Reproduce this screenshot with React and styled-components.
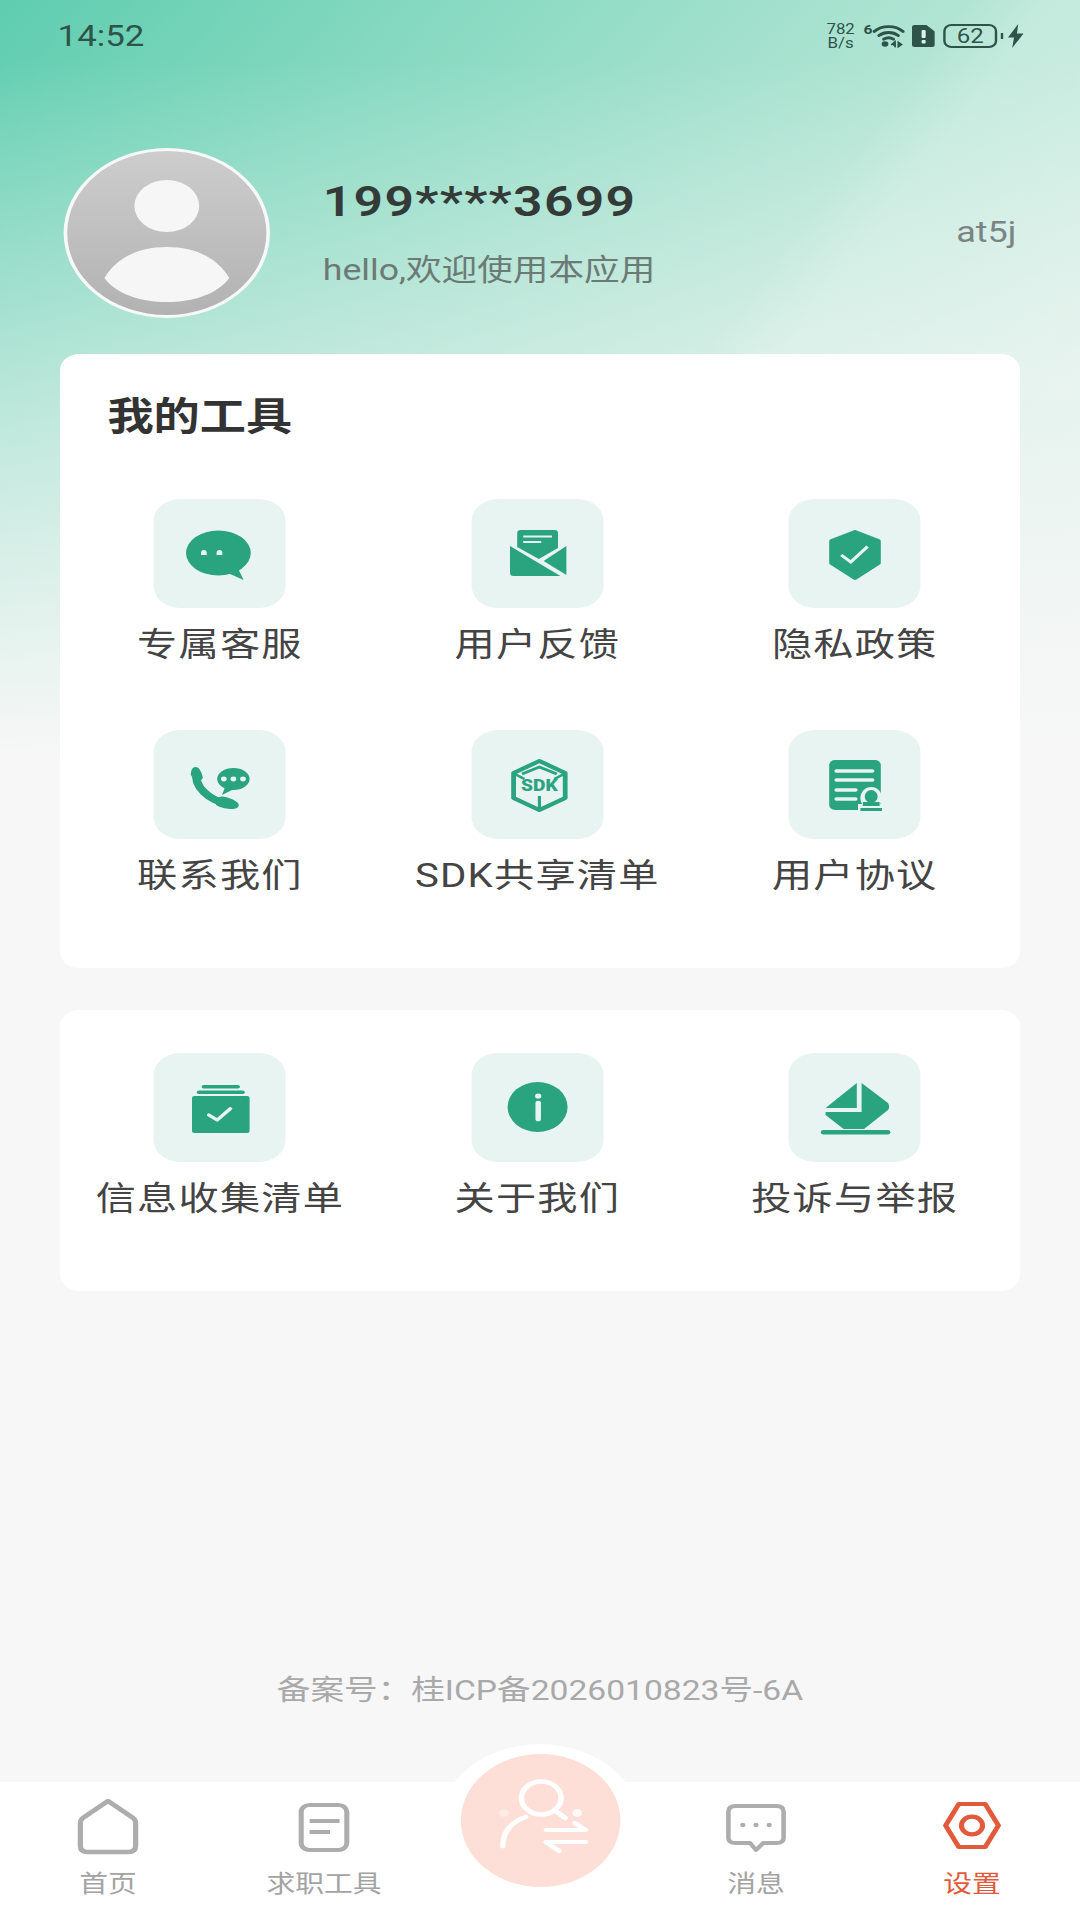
import React from "react";
import styled, { createGlobalStyle } from "styled-components";

const GREEN = "#2aa37f";
const GREY = "#adadad";
const ORANGE = "#e25a3c";

const GlobalStyle = createGlobalStyle`
  html, body {
    margin: 0;
    padding: 0;
    overflow: hidden;
    background: #f7f7f7;
  }
`;

// the whole screen in the reference is stretched sideways, so the page is laid
// out at 900 wide and scaled up to 1080
const Screen = styled.div`
  width: 900px;
  height: 1920px;
  display: flex;
  flex-direction: column;
  transform: scaleX(1.2);
  transform-origin: 0 0;
  font-family: Roboto, "Noto Sans CJK SC", sans-serif;
  background:
    linear-gradient(122deg, transparent 70%, rgba(255, 255, 255, 0.16) 76%, rgba(255, 255, 255, 0.1) 100%) 0 0 / 100% 400px no-repeat,
    linear-gradient(to bottom, rgba(247, 247, 247, 0) 0, rgba(247, 247, 247, 0) 60px, #f7f7f7 760px) 0 0 / 100% 800px no-repeat,
    linear-gradient(128deg, #5fcdb0 0%, #86d9c0 24%, #b0e4d3 52%, #d6efe6 78%, #e4f4ee 100%) 0 0 / 100% 800px no-repeat,
    #f7f7f7;
`;

const StatusBar = styled.div`
  height: 72px;
  box-sizing: border-box;
  padding: 0 47px 0 48px;
  display: flex;
  align-items: center;
  justify-content: space-between;
  color: #2e5348;
`;

const Clock = styled.span`
  font-size: 29px;
`;

const StatusIcons = styled.div`
  display: flex;
  align-items: center;
`;

const NetSpeed = styled.div`
  width: 26px;
  margin-right: 6px;
  font-size: 14px;
  line-height: 14px;
  text-align: center;
`;

const SimSlot = styled.span`
  font-size: 13px;
  font-weight: 700;
  line-height: 13px;
  align-self: flex-start;
  margin: 1px 0 0 0;
`;

const Battery = styled.div`
  width: 45px;
  height: 24px;
  box-sizing: border-box;
  margin-left: 7px;
  border: 2px solid #2e5348;
  border-radius: 7px;
  display: flex;
  align-items: center;
  justify-content: center;
  font-size: 20px;
  line-height: 20px;
`;

const BatteryNub = styled.div`
  width: 2.5px;
  height: 6px;
  margin: 0 4px 0 2.5px;
  background: #2e5348;
`;

const Profile = styled.div`
  margin-top: 76px;
  padding: 0 53px;
  display: flex;
  align-items: center;
`;

const Avatar = styled.div`
  width: 172px;
  height: 170px;
  box-sizing: border-box;
  border: 3px solid #f7f8f8;
  border-radius: 50%;
  overflow: hidden;
  background: linear-gradient(#cdcdcd, #b2b2b2);
  flex-shrink: 0;
`;

const ProfileText = styled.div`
  margin-left: 44px;
  display: flex;
  flex-direction: column;
  gap: 24px;
`;

const PhoneNumber = styled.div`
  font-size: 43px;
  line-height: 50px;
  font-weight: 600;
  letter-spacing: 1.1px;
  color: #333a38;
`;

const Greeting = styled.div`
  font-size: 29.7px;
  line-height: 40px;
  color: #6c7a76;
`;

const Version = styled.div`
  margin: 0 0 4px auto;
  font-size: 30px;
  color: #7a8583;
`;

const Card = styled.section`
  margin: ${(p) => p.$top}px 50px 0;
  padding: ${(p) => p.$padTop}px 0 ${(p) => p.$padBottom}px;
  background: #ffffff;
  border-radius: 16px;
`;

const CardTitle = styled.h2`
  margin: 0 0 58px 39.5px;
  font-size: 38.5px;
  line-height: 48px;
  font-weight: 700;
  color: #333333;
`;

const ToolGrid = styled.div`
  display: grid;
  grid-template-columns: repeat(3, 264.5px);
  row-gap: 65px;
  padding-left: 1px;
`;

const Tool = styled.div`
  display: flex;
  flex-direction: column;
  align-items: center;
`;

const ToolTile = styled.div`
  width: 110px;
  height: 109px;
  border-radius: 22px;
  background: #e8f4f1;
`;

const TileSvg = styled.svg`
  display: block;
  width: 110px;
  height: 109px;
`;

const ToolLabel = styled.div`
  margin-top: 17px;
  font-size: 33.5px;
  line-height: 40px;
  letter-spacing: 1px;
  color: #444444;
  white-space: nowrap;
`;

const Filing = styled.div`
  margin-top: auto;
  margin-bottom: 71px;
  text-align: center;
  font-size: 28px;
  line-height: 40px;
  color: #a9a9a9;
`;

const TabBar = styled.nav`
  position: relative;
  height: 138px;
  display: grid;
  grid-template-columns: repeat(5, 1fr);
  background: #ffffff;
`;

const Tab = styled.div`
  position: relative;
  display: flex;
  flex-direction: column;
  align-items: center;
  height: 100%;
  color: ${(p) => (p.$active ? ORANGE : "#a3a3a3")};
`;

const TabIcon = styled.svg`
  display: block;
  width: 60px;
  height: 66px;
  margin-top: 14px;
`;

const TabLabel = styled.div`
  position: absolute;
  top: 86px;
  font-size: 24px;
  line-height: 32px;
  white-space: nowrap;
`;

const CenterDome = styled.div`
  position: absolute;
  left: 50%;
  top: -38px;
  width: 172px;
  height: 172px;
  margin-left: -86px;
  border-radius: 50%;
  background: #ffffff;
`;

const CenterButton = styled.div`
  position: absolute;
  left: 50%;
  top: -28px;
  width: 133px;
  height: 133px;
  margin-left: -66.5px;
  border-radius: 50%;
  background: #fddfd8;
`;

const WifiIcon = () => (
  <svg width="27" height="24" viewBox="0 0 27 24" fill="none" stroke="#2e5348" strokeWidth="2.8" strokeLinecap="round">
    <path d="M1.5 7.5C8 1 19 1 25.5 7.5" />
    <path d="M5.5 11.5C10 7.5 17 7.5 21.5 11.5" />
    <path d="M9.5 15.2C12 13.4 15 13.4 17.5 15.2" />
    <circle cx="10.5" cy="20" r="2.8" fill="#2e5348" stroke="none" />
    <path d="M16 20.5l3-3v5.5M21.5 18v5l3-2.5z" strokeWidth="1.2" fill="#2e5348" />
  </svg>
);

const SimIcon = () => (
  <svg width="19" height="22" viewBox="0 0 19 22" style={{ marginLeft: 6 }}>
    <path d="M2 0H12L19 6.5V20a2 2 0 0 1-2 2H2a2 2 0 0 1-2-2V2a2 2 0 0 1 2-2z" fill="#2e5348" />
    <rect x="8" y="5" width="3.4" height="8" rx="1" fill="#dff2ea" />
    <rect x="8" y="15" width="3.4" height="3.4" rx="1" fill="#dff2ea" />
  </svg>
);

const BoltIcon = () => (
  <svg width="13" height="24" viewBox="0 0 13 24">
    <path d="M8.5 0L0 13.5H5L3.5 24L13 9.5H7.5z" fill="#2e5348" />
  </svg>
);

const PersonGlyph = () => (
  <svg width="166" height="164" viewBox="0 0 166 164">
    <ellipse cx="83" cy="55" rx="27" ry="26" fill="#f6f6f6" />
    <path d="M31 127C41 107 59 96 83 96C107 96 125 107 135 127C125 143 105 151 83 151C61 151 41 143 31 127z" fill="#f6f6f6" />
  </svg>
);

const ChatIcon = () => (
  <TileSvg viewBox="0 0 110 109">
    <ellipse cx="54" cy="54" rx="27" ry="22.5" fill={GREEN} />
    <path d="M60 73L75 81L69 66z" fill={GREEN} />
    <path d="M39.5 56v-2a2.4 3 0 0 1 4.8 0v2zM52.5 56v-2a2.4 3 0 0 1 4.8 0v2z" fill="#e8f4f1" />
  </TileSvg>
);

const MailIcon = () => (
  <TileSvg viewBox="0 0 110 109">
    <path d="M41 31H69q3 0 3 3V49L56 60L38 48V34q0-3 3-3z" fill={GREEN} />
    <path d="M43 37.5H67M43 43H58" stroke="#e8f4f1" strokeWidth="2" />
    <path d="M32 47L74 77H35q-3 0-3-3z" fill={GREEN} />
    <path d="M79 47V76L60 62z" fill={GREEN} />
  </TileSvg>
);

const ShieldIcon = () => (
  <TileSvg viewBox="0 0 110 109">
    <path d="M55.5 33L75 42V64L55.5 79L36 64V42z" fill={GREEN} stroke={GREEN} strokeWidth="4" strokeLinejoin="round" />
    <path d="M44 56L52 63L66 47.5" fill="none" stroke="#e8f4f1" strokeWidth="2.8" />
  </TileSvg>
);

const PhoneIcon = () => (
  <TileSvg viewBox="0 0 110 109">
    <path d="M36 42C33 56 46 71 63 74" fill="none" stroke={GREEN} strokeWidth="7" />
    <path d="M35 37c3 0 5 5 6 10c0 3-3 4-6 5l-4-7c0-4 1-8 4-8zM52 69c3-3 5-3 8-2c6 2 11 5 11 8c0 3-3 4-6 4c-3 0-9-1-13-4z" fill={GREEN} />
    <ellipse cx="66.5" cy="49" rx="13.5" ry="11" fill={GREEN} />
    <path d="M60 56L57 65L67 59z" fill={GREEN} />
    <circle cx="58.5" cy="49" r="2.4" fill="#e8f4f1" />
    <circle cx="66.5" cy="49" r="2.4" fill="#e8f4f1" />
    <circle cx="74.5" cy="49" r="2.4" fill="#e8f4f1" />
  </TileSvg>
);

const SdkIcon = () => (
  <TileSvg viewBox="0 0 110 109">
    <path d="M56.5 31L78 43V68L56.5 80L35 68V43z" fill="none" stroke={GREEN} strokeWidth="4" strokeLinejoin="round" />
    <path d="M36 44L44 49M77 44L69 49M42 44L56.5 37L71 44M56.5 66V79" fill="none" stroke={GREEN} strokeWidth="2.6" />
    <text x="56.5" y="61" textAnchor="middle" fontFamily="Roboto, sans-serif" fontSize="16" fontWeight="900" fill={GREEN}>SDK</text>
  </TileSvg>
);

const AgreementIcon = () => (
  <TileSvg viewBox="0 0 110 109">
    <rect x="34" y="30" width="43" height="50" rx="5" fill={GREEN} />
    <path d="M40 41H70M40 50H70M40 60H56M40 69H56" stroke="#e8f4f1" strokeWidth="3.4" strokeLinecap="round" />
    <ellipse cx="69" cy="68" rx="9" ry="11" fill="#e8f4f1" />
    <rect x="58" y="74" width="22" height="9" fill="#e8f4f1" />
    <ellipse cx="69" cy="66.5" rx="5.4" ry="6.5" fill={GREEN} />
    <rect x="62" y="72" width="14" height="4" fill={GREEN} />
    <rect x="60" y="78" width="18" height="3" fill={GREEN} />
  </TileSvg>
);

const CollectIcon = () => (
  <TileSvg viewBox="0 0 110 109">
    <rect x="40" y="32" width="32" height="3.6" rx="1.8" fill={GREEN} />
    <rect x="36" y="37.5" width="40" height="3.6" rx="1.8" fill={GREEN} />
    <rect x="32" y="43" width="48" height="37" rx="2" fill={GREEN} />
    <path d="M46 62L53 67L64 55.6" fill="none" stroke="#e8f4f1" strokeWidth="3.2" strokeLinecap="round" strokeLinejoin="round" />
  </TileSvg>
);

const InfoIcon = () => (
  <TileSvg viewBox="0 0 110 109">
    <circle cx="55" cy="54" r="25" fill={GREEN} />
    <circle cx="55.5" cy="43" r="2.6" fill="#e8f4f1" />
    <path d="M55.5 50V66" stroke="#e8f4f1" strokeWidth="4.6" strokeLinecap="round" />
  </TileSvg>
);

const ReportIcon = () => (
  <TileSvg viewBox="0 0 110 109">
    <path d="M57 30V55H31z" fill={GREEN} />
    <path d="M61 30L83 50Q85 54 83 57L63 76H46L31 62V59H61z" fill={GREEN} />
    <rect x="27" y="77" width="58" height="4.4" rx="2.2" fill={GREEN} />
  </TileSvg>
);

const HomeIcon = () => (
  <TabIcon viewBox="0 0 60 66">
    <path d="M30 5L51 22Q53 24 53 27V50Q53 56 47 56H13Q7 56 7 50V27Q7 24 9 22z" fill="none" stroke={GREY} strokeWidth="4.4" strokeLinejoin="round" />
  </TabIcon>
);

const JobsIcon = () => (
  <TabIcon viewBox="0 0 60 66">
    <rect x="11" y="9" width="38" height="45" rx="7" fill="none" stroke={GREY} strokeWidth="4.2" />
    <path d="M18 25H43M18 36H35" stroke={GREY} strokeWidth="3.8" />
  </TabIcon>
);

const MessageIcon = () => (
  <TabIcon viewBox="0 0 60 66">
    <path d="M13 10H47Q53 10 53 16V42Q53 47 47 47H36L30 54L25 47H13Q7 47 7 42V16Q7 10 13 10z" fill="none" stroke={GREY} strokeWidth="3.8" strokeLinejoin="round" />
    <circle cx="19" cy="29" r="2.2" fill={GREY} />
    <circle cx="30" cy="29" r="2.2" fill={GREY} />
    <circle cx="41" cy="29" r="2.2" fill={GREY} />
  </TabIcon>
);

const SettingsIcon = () => (
  <TabIcon viewBox="0 0 60 66">
    <path d="M19 8H41L52 29.5L41 51H19L8 29.5z" fill="none" stroke={ORANGE} strokeWidth="4.2" strokeLinejoin="round" />
    <circle cx="30" cy="29.5" r="8.8" fill="none" stroke={ORANGE} strokeWidth="4.2" />
  </TabIcon>
);

const SwitchUserIcon = () => (
  <svg width="133" height="133" viewBox="0 0 133 133" fill="none" stroke="#ffffff" strokeWidth="4.6" strokeLinecap="round">
    <circle cx="67" cy="44" r="16.5" />
    <path d="M35 92C35 78 42 68 54 63" />
    <path d="M79 57L87 64" />
    <path d="M71 76H104M71 88H104" strokeWidth="4.2" />
    <path d="M104 76L95 69M71 88L82 97" strokeWidth="4.2" />
    <circle cx="97" cy="59" r="4" fill="#ffffff" fillOpacity="0.8" stroke="none" />
    <circle cx="36" cy="59" r="4" fill="#ffffff" fillOpacity="0.35" stroke="none" />
  </svg>
);

const mainTools = [
  { label: "专属客服", Icon: ChatIcon },
  { label: "用户反馈", Icon: MailIcon },
  { label: "隐私政策", Icon: ShieldIcon },
  { label: "联系我们", Icon: PhoneIcon },
  { label: "SDK共享清单", Icon: SdkIcon },
  { label: "用户协议", Icon: AgreementIcon },
];

const otherTools = [
  { label: "信息收集清单", Icon: CollectIcon },
  { label: "关于我们", Icon: InfoIcon },
  { label: "投诉与举报", Icon: ReportIcon },
];

const ToolList = ({ items }) => (
  <ToolGrid>
    {items.map(({ label, Icon }) => (
      <Tool key={label}>
        <ToolTile>
          <Icon />
        </ToolTile>
        <ToolLabel>{label}</ToolLabel>
      </Tool>
    ))}
  </ToolGrid>
);

export default function App() {
  return (
    <Screen>
      <GlobalStyle />
      <StatusBar>
        <Clock>14:52</Clock>
        <StatusIcons>
          <NetSpeed>
            782
            <br />
            B/s
          </NetSpeed>
          <SimSlot>6</SimSlot>
          <WifiIcon />
          <SimIcon />
          <Battery>62</Battery>
          <BatteryNub />
          <BoltIcon />
        </StatusIcons>
      </StatusBar>

      <Profile>
        <Avatar>
          <PersonGlyph />
        </Avatar>
        <ProfileText>
          <PhoneNumber>199****3699</PhoneNumber>
          <Greeting>hello,欢迎使用本应用</Greeting>
        </ProfileText>
        <Version>at5j</Version>
      </Profile>

      <Card $top={36} $padTop={39} $padBottom={72}>
        <CardTitle>我的工具</CardTitle>
        <ToolList items={mainTools} />
      </Card>

      <Card $top={42} $padTop={43} $padBottom={72}>
        <ToolList items={otherTools} />
      </Card>

      <Filing>备案号：桂ICP备2026010823号-6A</Filing>

      <TabBar>
        <Tab>
          <HomeIcon />
          <TabLabel>首页</TabLabel>
        </Tab>
        <Tab>
          <JobsIcon />
          <TabLabel>求职工具</TabLabel>
        </Tab>
        <Tab />
        <Tab>
          <MessageIcon />
          <TabLabel>消息</TabLabel>
        </Tab>
        <Tab $active>
          <SettingsIcon />
          <TabLabel>设置</TabLabel>
        </Tab>
        <CenterDome />
        <CenterButton>
          <SwitchUserIcon />
        </CenterButton>
      </TabBar>
    </Screen>
  );
}
